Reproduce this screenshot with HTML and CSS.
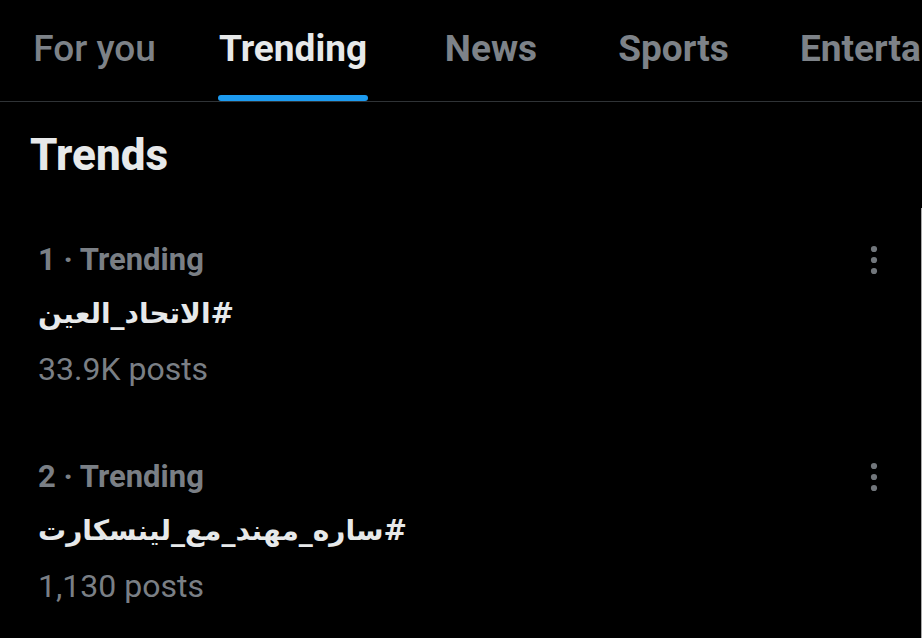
FILE: index.html
```html
<!DOCTYPE html>
<html lang="en">
<head>
<meta charset="utf-8">
<title>Trending</title>
<link rel="stylesheet" href="styles.css">
</head>
<body>
<nav class="tabs">
  <div class="tab tab-foryou"><span class="tab-label">For you</span></div>
  <div class="tab tab-trending active"><span class="tab-label">Trending</span><span class="tab-indicator"></span></div>
  <div class="tab tab-news"><span class="tab-label">News</span></div>
  <div class="tab tab-sports"><span class="tab-label">Sports</span></div>
  <div class="tab tab-ent"><span class="tab-label">Entertainment</span></div>
</nav>
<main class="content">
  <h1 class="heading">Trends</h1>
  <section class="trend-list">
    <article class="trend">
      <div class="trend-body">
        <div class="trend-meta">1 · Trending</div>
        <div class="trend-tag" dir="rtl">#الاتحاد_العين</div>
        <div class="trend-count">33.9K posts</div>
      </div>
      <svg class="more" width="12" height="34" viewBox="0 0 12 34" aria-hidden="true">
        <circle cx="6" cy="6" r="3.1"/>
        <circle cx="6" cy="17" r="3.1"/>
        <circle cx="6" cy="28" r="3.1"/>
      </svg>
    </article>
    <article class="trend">
      <div class="trend-body">
        <div class="trend-meta">2 · Trending</div>
        <div class="trend-tag" dir="rtl">#ساره_مهند_مع_لينسكارت</div>
        <div class="trend-count">1,130 posts</div>
      </div>
      <svg class="more" width="12" height="34" viewBox="0 0 12 34" aria-hidden="true">
        <circle cx="6" cy="6" r="3.1"/>
        <circle cx="6" cy="17" r="3.1"/>
        <circle cx="6" cy="28" r="3.1"/>
      </svg>
    </article>
  </section>
</main>
</body>
</html>
```

FILE: styles.css
```css
html, body {
  margin: 0;
  padding: 0;
  background: #000;
}

body {
  width: 922px;
  height: 638px;
  overflow: hidden;
  font-family: "Roboto", "DejaVu Sans", sans-serif;
  color: #e7e9ea;
}

.tabs {
  display: flex;
  height: 101px;
  border-bottom: 1px solid #2f3336;
  overflow: hidden;
}

.tab {
  flex: none;
  display: flex;
  flex-direction: column;
  align-items: center;
  justify-content: space-between;
  height: 101px;
  box-sizing: border-box;
  padding-top: 27px;
  color: #7d8288;
  font-size: 37px;
  font-weight: 700;
  line-height: 44px;
  white-space: nowrap;
}

.tab-foryou { width: 183px; padding-left: 6px; font-weight: 500; }
.tab-trending { width: 220px; }
.tab-news { width: 176px; }
.tab-sports { width: 189px; }
.tab-ent { padding-left: 32px; align-items: flex-start; }

.tab.active { color: #e7e9ea; }

.tab-indicator {
  display: block;
  width: 150px;
  height: 6px;
  border-radius: 3px;
  background: #1d9bf0;
}

.heading {
  margin: 27px 0 27px 30px;
  font-size: 44px;
  font-weight: 800;
  line-height: 52px;
}

.trend-list {
  border-right: 1px solid #a8a8a8;
}

.trend {
  display: flex;
  align-items: flex-start;
  padding: 24px 41px 27px 38px;
}

.trend-body {
  flex: 1;
  line-height: 56px;
}

.trend-meta {
  color: #7a7f85;
  font-size: 31px;
  font-weight: 700;
}

.trend-tag {
  width: fit-content;
  font-family: "DejaVu Sans", sans-serif;
  font-size: 28px;
  font-weight: 700;
  line-height: 52px;
  color: #e7e9ea;
}

.trend-count {
  color: #7a7f85;
  font-size: 32px;
  font-weight: 400;
  line-height: 58px;
}

.more {
  flex: none;
  margin-top: 11px;
  fill: #71767b;
}
```
